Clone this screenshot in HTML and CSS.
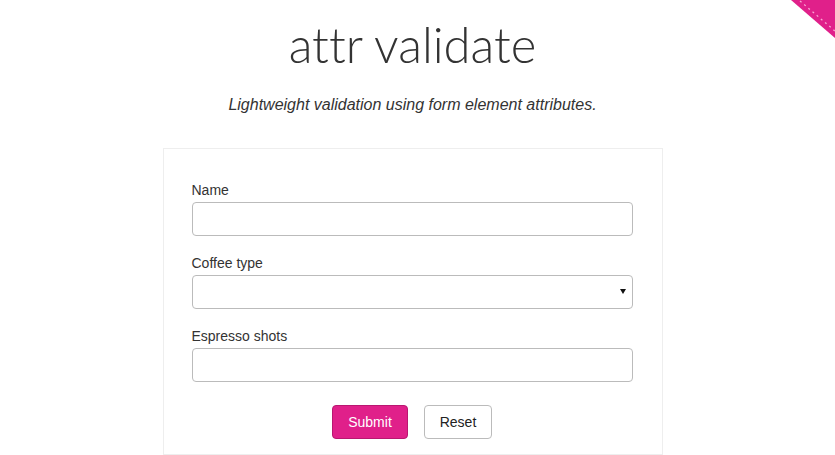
FILE: index.html
```html
<!DOCTYPE html>
<html>
<head>
<meta charset="utf-8">
<link rel="stylesheet" href="styles.css">
</head>
<body>
<div class="ribbon">
  <svg width="44" height="40" viewBox="0 0 44 40">
    <polygon points="0,0 44,0 44,38" fill="#e0208a"/>
    <line x1="9" y1="1" x2="44" y2="31" stroke="#f7a6d2" stroke-width="1.3" stroke-dasharray="2 3.5"/>
  </svg>
</div>
<main class="page">
  <h1 class="title">attr validate</h1>
  <p class="lead">Lightweight validation using form element attributes.</p>
  <form class="card">
    <div class="group">
      <label class="label">Name</label>
      <input class="control" type="text">
    </div>
    <div class="group">
      <label class="label">Coffee type</label>
      <div class="select-wrap">
        <select class="control select"><option></option></select>
      </div>
    </div>
    <div class="group">
      <label class="label">Espresso shots</label>
      <input class="control" type="text">
    </div>
    <div class="actions">
      <button type="button" class="btn btn-primary">Submit</button>
      <button type="button" class="btn btn-default">Reset</button>
    </div>
  </form>
</main>
</body>
</html>
```
FILE: styles.css
```css
* { box-sizing: border-box; }
html, body { margin: 0; padding: 0; background: #fff; }
body {
  font-family: "Liberation Sans", Arial, sans-serif;
  font-size: 14px;
  color: #333;
  overflow: hidden;
  height: 455px;
}
.ribbon {
  position: absolute;
  top: 0;
  right: 0;
  width: 44px;
  height: 40px;
}
.ribbon svg { display: block; }
.page {
  display: flex;
  flex-direction: column;
  align-items: center;
  padding-right: 10px;
}
.title {
  font-family: Lato, sans-serif;
  font-weight: 300;
  font-size: 49px;
  line-height: 60px;
  margin: 14px 0 0;
  color: #333;
  font-variant-ligatures: none;
  font-feature-settings: "liga" 0;
}
.lead {
  font-style: italic;
  font-size: 16px;
  line-height: 22px;
  margin: 20px 0 0;
  color: #333;
}
.card {
  margin-top: 32px;
  width: 500px;
  border: 1px solid #eee;
  padding: 31px 29px 15px 28px;
}
.group { margin-bottom: 17px; }
.label {
  display: block;
  line-height: 20px;
  margin-bottom: 2px;
}
.control {
  display: block;
  width: 100%;
  height: 34px;
  border: 1px solid #bbb;
  border-radius: 4px;
  background: #fff;
  font-family: inherit;
  font-size: 14px;
  padding: 6px 12px;
}
.select-wrap { position: relative; }
.select { -webkit-appearance: none; appearance: none; }
.select-wrap::after {
  content: "";
  position: absolute;
  right: 7px;
  top: 14px;
  border-left: 3.5px solid transparent;
  border-right: 3.5px solid transparent;
  border-top: 5px solid #111;
}
.actions {
  display: flex;
  justify-content: center;
  gap: 16px;
  margin-top: 23px;
}
.btn {
  height: 34px;
  padding: 6px 14px;
  font-family: inherit;
  font-size: 14px;
  border-radius: 4px;
  line-height: 20px;
}
.btn-primary {
  background: #e0208a;
  border: 1px solid #b91771;
  color: #fff;
  width: 76px;
}
.btn-default {
  background: #fff;
  border: 1px solid #bbb;
  color: #222;
  width: 68px;
}
```
